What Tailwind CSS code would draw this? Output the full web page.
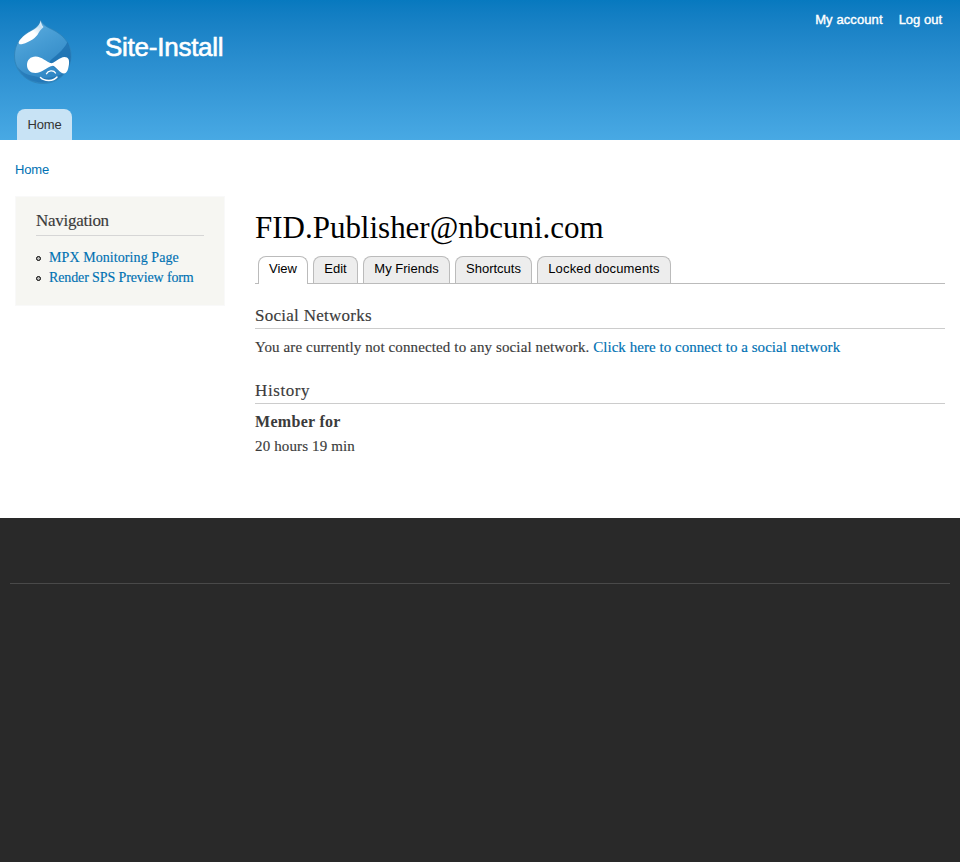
<!DOCTYPE html>
<html lang="en">
<head>
<meta charset="utf-8">
<title>FID.Publisher@nbcuni.com | Site-Install</title>
<script src="https://cdn.jsdelivr.net/npm/@tailwindcss/browser@4"></script>
</head>
<body class="bg-[#292929] font-['Liberation_Serif',serif] text-[15px] leading-5 text-[#3b3b3b]">
<header class="flex h-[140px] flex-col justify-between bg-linear-to-b from-[#0779bf] to-[#48a9e4] font-['Liberation_Sans',sans-serif]">
  <div class="flex items-start pl-[14px] pr-[18px]">
    <svg class="mt-5 h-[65px] w-[58px] shrink-0" viewBox="14 20 58 65">
      <defs>
        <linearGradient id="drop" x1="0" y1="0" x2="0.5" y2="1"><stop offset="0" stop-color="#62b0e2"/><stop offset=".5" stop-color="#459bd3"/><stop offset="1" stop-color="#2f86c4"/></linearGradient>
        <linearGradient id="shine" x1="0" y1="1" x2="1" y2="0"><stop offset="0" stop-color="#fff"/><stop offset=".55" stop-color="#fff"/><stop offset=".8" stop-color="#c4e0f3"/><stop offset="1" stop-color="#fff"/></linearGradient>
      </defs>
      <path d="M40.500 20C43 26 50 28 56 31.500C65 37 71 45 71 55.500C71 72 58 83.500 43 83.500C27 83.500 14.500 71 14.500 56C14.500 45 20 37 28 32C34 28.500 39.500 26 40.500 20Z" fill="url(#drop)" stroke="#2f83b8" stroke-width=".8"/>
      <path d="M67.500 42C63 51 55 56 50 61C49 66 61 72 65 73C72 64 72.500 53 67.500 42Z" fill="#1b6eae" opacity=".75"/>
      <path d="M17 66C22 78 32 82.500 43 82.500C53 82.500 61 78 65 72C55 79 43 79 34 76C26 75 20 71 17 66Z" fill="#1769a9" opacity=".5"/>
      <path d="M40.800 20.500C39.500 26 36 28.500 30 31.800C25 34.500 20.500 38.500 18.800 42C18.300 44 20 44.800 22.500 44C30 42 36.500 37.500 38.500 33C40 30 41.500 29.500 43.500 27C42 25.500 41 23.500 40.800 20.500Z" fill="url(#shine)"/>
      <path d="M35.500 56.500C42 56.500 46 62 51.500 63.300C56 62 59.500 57.500 64.500 57C68.500 57 69.500 60 69 64C68.500 69 67 73.500 64 73.500C60 73.500 57 67.500 53 65.700C47 66.500 42 73 35.500 73C30 73 27 69.500 27 65C27 60 30.500 56.500 35.500 56.500Z" fill="#fff"/>
      <path d="M46.500 73.700C48 70.500 53.500 69.700 55.500 73" fill="none" stroke="#fff" stroke-width="1.400" stroke-linecap="round"/>
      <path d="M40.500 77.500C44.500 81.500 53.500 81.500 57 77" fill="none" stroke="#fff" stroke-width="1.500" stroke-linecap="round"/>
    </svg>
    <div class="ml-[33px] mt-[31px] text-[26px] leading-8 tracking-[-0.25px] text-white [-webkit-text-stroke:0.6px_white]">Site-Install</div>
    <nav class="ml-auto mt-[10px] flex gap-4 text-[13px] leading-5 text-white [-webkit-text-stroke:0.4px_white]"><a class="tracking-[0.1px]">My account</a><a>Log out</a></nav>
  </div>
  <nav class="ml-[17px] flex h-[31px] w-[55px] items-center justify-center rounded-t-lg bg-[#c8e3f5] text-[13px] tracking-[-0.15px] text-[#333]"><a>Home</a></nav>
</header>
<main class="h-[378px] bg-white px-[15px] pt-5">
  <div class="font-['Liberation_Sans',sans-serif] text-[13px] leading-5 tracking-[-0.15px] text-[#0071b3]"><a>Home</a></div>
  <div class="mt-4 flex items-start gap-[30px]">
    <aside class="h-[110px] w-[210px] shrink-0 border border-[#f9f9f9] bg-[#f6f6f2] px-5 pt-[14px]">
      <h2 class="h-[25px] border-b border-[#d6d6d6] text-[17px] leading-5 tracking-[-0.27px] [-webkit-text-stroke:0.15px]">Navigation</h2>
      <ul class="mt-3 text-[14px] leading-5 text-[#0071b3] [-webkit-text-stroke:0.15px]">
        <li class="flex items-center"><i class="mr-2 size-[5px] rounded-full border border-black bg-[#bbb]"></i><a class="tracking-[0.08px]">MPX Monitoring Page</a></li>
        <li class="flex items-center"><i class="mr-2 size-[5px] rounded-full border border-black bg-[#bbb]"></i><a class="tracking-[-0.12px]">Render SPS Preview form</a></li>
      </ul>
    </aside>
    <section class="w-[690px] pt-4">
      <h1 class="text-[31px] leading-8 tracking-[-0.01px] text-black">FID.Publisher@nbcuni.com</h1>
      <nav class="mt-3 flex h-7 gap-[5px] border-b border-[#bbb] pl-[3px] font-['Liberation_Sans',sans-serif] text-[13px] leading-6 text-black">
        <a class="h-7 w-[50px] rounded-t-lg border border-b-0 border-[#bbb] bg-white text-center">View</a>
        <a class="w-[45px] rounded-t-lg border border-b-0 border-[#bbb] bg-[#ededed] text-center">Edit</a>
        <a class="w-[87px] rounded-t-lg border border-b-0 border-[#bbb] bg-[#ededed] text-center">My Friends</a>
        <a class="w-[77px] rounded-t-lg border border-b-0 border-[#bbb] bg-[#ededed] text-center">Shortcuts</a>
        <a class="w-[134px] rounded-t-lg border border-b-0 border-[#bbb] bg-[#ededed] text-center tracking-[0.15px]">Locked documents</a>
      </nav>
      <h3 class="mt-[22px] h-[23px] border-b border-[#ccc] text-[17px] leading-5 tracking-[0.27px] [-webkit-text-stroke:0.15px]">Social Networks</h3>
      <p class="mt-2 [-webkit-text-stroke:0.15px]"><span class="tracking-[0.12px]">You are currently not connected to any social network.</span> <a class="tracking-[0.04px] text-[#0071b3]">Click here to connect to a social network</a></p>
      <h3 class="mt-6 h-[23px] border-b border-[#ccc] text-[17px] leading-5 tracking-[0.6px] [-webkit-text-stroke:0.15px]">History</h3>
      <h4 class="mt-2 text-[16px] leading-5 font-bold tracking-[0.3px]">Member for</h4>
      <p class="mt-1 tracking-[0.13px] [-webkit-text-stroke:0.15px]">20 hours 19 min</p>
    </section>
  </div>
</main>
<footer class="h-[344px] px-[10px] pt-[65px]"><div class="border-t border-[#494949]"></div></footer>
</body>
</html>
